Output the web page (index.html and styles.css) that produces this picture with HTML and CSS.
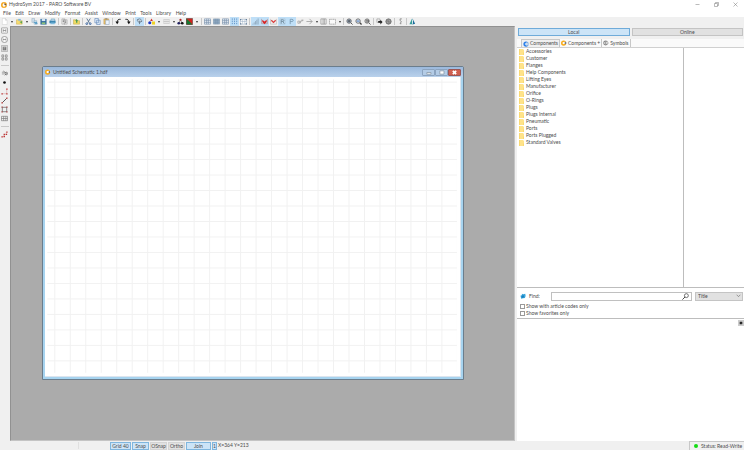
FILE: index.html
```
<!DOCTYPE html>
<html lang="en">
<head>
    <meta charset="UTF-8">
    <meta name="viewport" content="width=device-width, initial-scale=1.0">
    <title>HydroSym 2017 - PARO Software BV</title>
    <link rel="stylesheet" href="styles.css">
</head>
<body>

<!-- shared icons -->
<svg class="defs" aria-hidden="true">
    <symbol id="logo" viewBox="0 0 16 16"><circle cx="8" cy="8" r="6" fill="none" stroke="#f5a51c" stroke-width="4"/><path d="M8 2v12M8 8h7" stroke="#fff" stroke-width="2"/><path d="M9 3l5 3v3l-5-1z" fill="#6b5a44"/></symbol>
    <symbol id="part-blue" viewBox="0 0 16 16"><circle cx="8" cy="8" r="5" fill="#b8dafa" stroke="#2f80e8" stroke-width="4"/><path d="M8 4h7v8H8z" fill="#eaf4ff"/><path d="M9 5h5M9 8h6M9 11h5" stroke="#5f7fa8"/></symbol>
    <symbol id="part-orange" viewBox="0 0 16 16"><circle cx="7" cy="8" r="5" fill="#fff" stroke="#f8ac1c" stroke-width="4"/><path d="M8 5h7v5H8z" fill="#fff"/><path d="M9 8h6M12 5v6" stroke="#59636f" stroke-width="2"/></symbol>
    <symbol id="part-gray" viewBox="0 0 16 16"><circle cx="7" cy="8" r="5" fill="#fff" stroke="#888" stroke-width="3"/><path d="M8 5h7v5H8z" fill="#fff"/><path d="M9 8h6M7 5v6" stroke="#777" stroke-width="2"/></symbol>
    <symbol id="folder" viewBox="0 0 10 12"><path d="M0 0h8l2 2v10H0z" fill="#ffe38a"/><path d="M0 0h2v12H0z" fill="#f9d973"/><path d="M8 7h2v5H8z" fill="#f9d973"/></symbol>
    <symbol id="new" viewBox="0 0 16 16"><path d="M3 1h7l4 4v10H3z" fill="#fff" stroke="#c5c5c5"/><path d="M10 1v4h4" fill="none" stroke="#b0b0b0"/></symbol>
    <symbol id="open" viewBox="0 0 16 16"><path d="M1 4h5l1 2h7v8H1z" fill="#f7dc72" stroke="#c6a548"/><path d="M5 2h6v4H5z" fill="#83bbe1"/><path d="M8 9l6-2v6z" fill="#5ba553"/></symbol>
    <symbol id="import" viewBox="0 0 16 16"><path d="M2 1h6v9H2z" fill="#cfe0ed" stroke="#8da4b5"/><path d="M7 6h6v8H7z" fill="#d9e7ef" stroke="#7aa0b9"/><path d="M7 10h7M9 13h6" stroke="#3d8fc0" stroke-width="2"/></symbol>
    <symbol id="save" viewBox="0 0 16 16"><path d="M1 2h14v13H1z" fill="#356d9e"/><path d="M4 2h8v5H4z" fill="#d9e8f4"/><path d="M4 10h8v4H4z" fill="#8ec37a"/></symbol>
    <symbol id="print" viewBox="0 0 16 16"><path d="M1 6h14v6H1z" fill="#3886b2"/><path d="M5 2h8v5H4z" fill="#b9d8ea" stroke="#508caf"/><path d="M4 10h9v4H3z" fill="#7db9dc"/></symbol>
    <symbol id="props" viewBox="0 0 16 16"><path d="M2 2h7v12H2zM7 4h7v10H7z" fill="#eee" stroke="#888"/><path d="M4 5h3M4 8h3M9 7h3M9 10h3" stroke="#666" stroke-width="1.5"/></symbol>
    <symbol id="export" viewBox="0 0 16 16"><path d="M1 4h5l1 2h8v8H1z" fill="#f0da65" stroke="#b5a13c"/><path d="M8 2l4 4h-2v5H7V6H5z" fill="#4c9951"/></symbol>
    <symbol id="cut" viewBox="0 0 16 16"><path d="M4 1l6 10M12 1L6 11" stroke="#56708e" stroke-width="2" fill="none"/><circle cx="4" cy="13" r="2" fill="none" stroke="#345f9c" stroke-width="2"/><circle cx="12" cy="13" r="2" fill="none" stroke="#345f9c" stroke-width="2"/></symbol>
    <symbol id="copy" viewBox="0 0 16 16"><path d="M2 1h8v10H2zM6 5h8v10H6z" fill="#e4f0fc" stroke="#6589ba" stroke-width="1.5"/></symbol>
    <symbol id="paste" viewBox="0 0 16 16"><path d="M2 2h11v12H2z" fill="#eac06a" stroke="#b38c47"/><path d="M6 5h8v10H6z" fill="#edf4fd" stroke="#7a9bc4"/><path d="M5 1h5v2H5z" fill="#777"/></symbol>
    <symbol id="undo" viewBox="0 0 16 16"><path d="M13 3C7 2 5 5 5 11" fill="none" stroke="#222" stroke-width="2"/><path d="M1 8h8l-4 6z" fill="#111"/></symbol>
    <symbol id="redo" viewBox="0 0 16 16"><path d="M3 3c6-1 8 2 8 8" fill="none" stroke="#222" stroke-width="2"/><path d="M7 8h8l-4 6z" fill="#111"/></symbol>
    <symbol id="pin" viewBox="0 0 16 16"><circle cx="8" cy="6" r="4" fill="#dbe9f3" stroke="#6f7f8e" stroke-width="2"/><path d="M8 6v8M2 5l3-2M11 9l3-2" stroke="#677786" stroke-width="2"/></symbol>
    <symbol id="shapes" viewBox="0 0 16 16"><path d="M8 1l3 6H5z" fill="#d42a20"/><circle cx="4" cy="11" r="3.500" fill="#1d35c7"/><path d="M9 8h7v7H9z" fill="#f0d323"/></symbol>
    <symbol id="line-style" viewBox="0 0 16 16"><path d="M1 4h14M1 8h14M1 12h14" stroke="#b4b4b4" stroke-width="1.5"/><path d="M1 4v8M15 4v8" stroke="#ccc"/></symbol>
    <symbol id="nodes" viewBox="0 0 16 16"><path d="M8 4L4 12h8z" fill="none" stroke="#222"/><circle cx="8" cy="4" r="2.500" fill="#b62226"/><circle cx="4" cy="12" r="3" fill="#202060"/><circle cx="12" cy="12" r="3" fill="#111"/></symbol>
    <symbol id="colors" viewBox="0 0 16 16"><path d="M1 1h14v14H1z" fill="#d1211c"/><path d="M1 1v14h14z" fill="#167830"/><path d="M1 1h14v14H1z" fill="none" stroke="#333"/></symbol>
    <symbol id="grid" viewBox="0 0 16 16"><path d="M1 2h14v12H1z" fill="#eef5fc"/><path d="M1 2h14M1 6h14M1 10h14M1 14h14M1 2v12M6 2v12M10 2v12M15 2v12" stroke="#7890aa" stroke-width="1.5"/></symbol>
    <symbol id="grid-full" viewBox="0 0 16 16"><path d="M1 2h14v12H1z" fill="#91abc3"/><path d="M1 2h14M1 6h14M1 10h14M1 14h14M1 2v12M6 2v12M10 2v12M15 2v12" stroke="#7890aa"/></symbol>
    <symbol id="grid-dots" viewBox="0 0 16 16"><path d="M3 1v14M8 1v14M13 1v14" stroke="#5c90c7" stroke-width="2" stroke-dasharray="3 2"/></symbol>
    <symbol id="grid-edit" viewBox="0 0 16 16"><path d="M1 3h14v11H1zM6 3v11M11 3v11M1 8h14" fill="#fff" stroke="#8da4bd"/><path d="M0 2h3v3H0zM13 2h3v3h-3zM0 12h3v3H0zM13 12h3v3h-3z" fill="#657f9b"/></symbol>
    <symbol id="bars" viewBox="0 0 16 16"><path d="M2 13v2M5 10v5M8 7v8M11 4v11M14 1v14" stroke="#8197ab" stroke-width="1.500"/></symbol>
    <symbol id="snap" viewBox="0 0 16 16"><path d="M1 2v11h14V2" fill="none" stroke="#b5a1a9" stroke-width="2"/><path d="M3 4l5 4 5-4v5l-5 5-5-5z" fill="#d92626"/></symbol>
    <symbol id="snap-line" viewBox="0 0 16 16"><path d="M1 2v12h14V2" fill="none" stroke="#bbb" stroke-width="1.500"/><path d="M3 5l5 5 5-5" fill="none" stroke="#d94040" stroke-width="3"/></symbol>
    <symbol id="regular" viewBox="0 0 16 16"><path d="M2 2h12v12H2z" fill="none" stroke="#a8bac7"/><path d="M5 13V4h4c3 0 3 4 0 4H5m4 0l3 5" fill="none" stroke="#718a9b" stroke-width="2"/></symbol>
    <symbol id="port" viewBox="0 0 16 16"><path d="M5 14V3h4c4 0 4 5 0 5H5" fill="none" stroke="#7a9bb3" stroke-width="2"/></symbol>
    <symbol id="turn" viewBox="0 0 16 16"><path d="M2 7h4v5H2zM8 12V7h4V4M10 5h5" fill="none" stroke="#999" stroke-width="1.5"/></symbol>
    <symbol id="arrow" viewBox="0 0 16 16"><path d="M1 8h13M8 2l6 6-6 6" fill="none" stroke="#8c8c8c" stroke-width="1.5"/></symbol>
    <symbol id="panel" viewBox="0 0 16 16"><path d="M2 2h12v12H2zM7 2v12M10 2v12" fill="#eee" stroke="#8f8f8f" stroke-width="1.5"/></symbol>
    <symbol id="frame" viewBox="0 0 16 16"><path d="M1 3h14v11H1z" fill="#fafafa" stroke="#888" stroke-width="1.5" stroke-dasharray="3 1"/></symbol>
    <symbol id="zoom-in" viewBox="0 0 16 16"><circle cx="7" cy="7" r="5" fill="#a6bdd7" stroke="#666" stroke-width="2"/><path d="M4 7h6M7 4v6M11 11l4 4" stroke="#444" stroke-width="2"/></symbol>
    <symbol id="zoom-out" viewBox="0 0 16 16"><circle cx="7" cy="7" r="5" fill="#dbe8f5" stroke="#666" stroke-width="2"/><path d="M4 7h6" stroke="#3565ae" stroke-width="2"/><path d="M11 11l4 4" stroke="#444" stroke-width="3"/></symbol>
    <symbol id="zoom-fit" viewBox="0 0 16 16"><circle cx="7" cy="7" r="5" fill="#ddd" stroke="#777" stroke-width="2"/><path d="M4 5h6v4H4M11 11l4 4" fill="none" stroke="#555" stroke-width="2"/></symbol>
    <symbol id="move" viewBox="0 0 16 16"><path d="M2 2h7v8H2z" fill="#eee" stroke="#777"/><path d="M5 7h5V4l5 5-5 6v-4H5z" fill="#222"/></symbol>
    <symbol id="globe" viewBox="0 0 16 16"><circle cx="8" cy="8" r="6" fill="#a0a0a0" stroke="#666" stroke-width="2"/><path d="M2 8h12M8 2v12M4 4l8 8" stroke="#777"/></symbol>
    <symbol id="info" viewBox="0 0 16 16"><path d="M11 2H7v4l3 2-3 5h3" fill="none" stroke="#888" stroke-width="2"/></symbol>
    <symbol id="help" viewBox="0 0 16 16"><path d="M7 1L1 14h7z" fill="#369d9a"/><path d="M8 1l6 12-6 2z" fill="#1c6a9b"/><path d="M7 4h2v9H7z" fill="#e4f5f3"/></symbol>
    <symbol id="block" viewBox="0 0 16 16"><rect x="1" y="2" width="14" height="12" rx="1" fill="#f8f8f8" stroke="#888" stroke-width="1.5"/><path d="M5 5v6M11 5v6M5 8h6" stroke="#777" stroke-width="1.5"/></symbol>
    <symbol id="block-round" viewBox="0 0 16 16"><circle cx="8" cy="8" r="7" fill="#f8f8f8" stroke="#777" stroke-width="1.5"/><path d="M5 6v4M11 6v4M5 8h6" stroke="#777" stroke-width="1.5"/></symbol>
    <symbol id="block-dark" viewBox="0 0 16 16"><path d="M1 1h14v14H1z" fill="#dedede" stroke="#888"/><path d="M4 4h8v8H4z" fill="#777"/><path d="M6 6h4M6 9h3" stroke="#eee"/></symbol>
    <symbol id="tiles" viewBox="0 0 16 16"><path d="M2 2h4v5H2zM10 2h4v5h-4zM2 9h4v5H2zM10 9h4v5h-4z" fill="#eee" stroke="#777" stroke-width="1.5"/></symbol>
    <symbol id="select" viewBox="0 0 16 16"><path d="M2 5h6l5 3-5 4M2 9h5M5 2l4 3" fill="none" stroke="#777" stroke-width="1.5"/><circle cx="12" cy="8" r="3" fill="none" stroke="#555" stroke-width="1.5"/></symbol>
    <symbol id="dot" viewBox="0 0 16 16"><circle cx="8" cy="8" r="3" fill="#111"/></symbol>
    <symbol id="elbow" viewBox="0 0 16 16"><path d="M2 13h11V3" fill="none" stroke="#d08c8c"/><path d="M1 12h3v3H1zM12 12h3v3h-3zM12 1h3v3h-3z" fill="#bd3030"/></symbol>
    <symbol id="line" viewBox="0 0 16 16"><path d="M3 13L13 3" stroke="#444" stroke-width="2"/><path d="M1 12h3v3H1zM12 1h3v3h-3z" fill="#bd3030"/></symbol>
    <symbol id="rect" viewBox="0 0 16 16"><path d="M3 3h10v10H3z" fill="none" stroke="#555" stroke-width="1.500"/><path d="M1 12h3v3H1zM12 1h3v3h-3zM1 1h3v3H1zM12 12h3v3h-3z" fill="#a84444"/></symbol>
    <symbol id="table" viewBox="0 0 16 16"><path d="M1 3h14v10H1zM1 8h14M6 3v10M11 3v10" fill="none" stroke="#777" stroke-width="1.5"/></symbol>
    <symbol id="steps" viewBox="0 0 16 16"><path d="M2 13h5V8h5V3" fill="none" stroke="#d08c8c"/><path d="M1 12h3v3H1zM6 11h3v3H6zM6 6h3v3H6zM11 6h3v3h-3zM12 1h3v3h-3z" fill="#bd3030"/></symbol>
    <symbol id="star" viewBox="0 0 16 16"><path d="M5 2l4 1 5-1 1 6-2 5-5 1-5 1-1-5-1-3 4-1z" fill="#3aa6dc"/><path d="M4 7l6-1 1 5-6 2z" fill="#1a7fbd"/></symbol>
    <symbol id="search" viewBox="0 0 16 16"><circle cx="10" cy="6" r="4.500" fill="none" stroke="#333" stroke-width="1.500"/><path d="M7 9l-6 6" stroke="#333" stroke-width="2"/></symbol>
</svg>

<div class="app">
    <header class="titlebar">
        <svg class="logo"><use href="#logo"/></svg>
        <h1 class="app-title">HydroSym 2017 - PARO Software BV</h1>
        <button class="caption-btn" aria-label="Minimize"><svg viewBox="0 0 10 10"><path d="M1 5h8" stroke="#777"/></svg></button>
        <button class="caption-btn" aria-label="Restore"><svg viewBox="0 0 10 10"><path d="M1 3h6v6H1zM3 3V1h6v6H7" fill="none" stroke="#777"/></svg></button>
        <button class="caption-btn" aria-label="Close"><svg viewBox="0 0 10 10"><path d="M1 1l8 8M9 1L1 9" stroke="#777"/></svg></button>
    </header>

    <nav class="menubar">
        <button>File</button>
        <button>Edit</button>
        <button>Draw</button>
        <button>Modify</button>
        <button>Format</button>
        <button>Assist</button>
        <button>Window</button>
        <button>Print</button>
        <button>Tools</button>
        <button>Library</button>
        <button>Help</button>
    </nav>

    <div class="toolbar" role="toolbar" aria-label="Standard">
        <button class="tool" aria-label="New"><svg><use href="#new"/></svg></button>
        <button class="drop" aria-label="New options"></button>
        <button class="tool" aria-label="Open"><svg><use href="#open"/></svg></button>
        <button class="drop" aria-label="Recent files"></button>
        <button class="tool" aria-label="Import"><svg><use href="#import"/></svg></button>
        <button class="tool" aria-label="Save"><svg><use href="#save"/></svg></button>
        <button class="tool" aria-label="Print"><svg><use href="#print"/></svg></button>
        <span class="sep"></span>
        <button class="tool" aria-label="Properties"><svg><use href="#props"/></svg></button>
        <span class="sep"></span>
        <button class="tool" aria-label="Export"><svg><use href="#export"/></svg></button>
        <span class="sep"></span>
        <button class="tool" aria-label="Cut"><svg><use href="#cut"/></svg></button>
        <button class="tool" aria-label="Copy"><svg><use href="#copy"/></svg></button>
        <button class="tool" aria-label="Paste"><svg><use href="#paste"/></svg></button>
        <span class="sep"></span>
        <button class="tool" aria-label="Undo"><svg><use href="#undo"/></svg></button>
        <button class="tool" aria-label="Redo"><svg><use href="#redo"/></svg></button>
        <span class="sep"></span>
        <button class="tool active" aria-label="Pin"><svg><use href="#pin"/></svg></button>
        <span class="sep"></span>
        <button class="tool" aria-label="Shapes"><svg><use href="#shapes"/></svg></button>
        <button class="drop" aria-label="Shape options"></button>
        <button class="tool" aria-label="Line style"><svg><use href="#line-style"/></svg></button>
        <button class="drop narrow" aria-label="Line style options"></button>
        <button class="tool" aria-label="Nodes"><svg><use href="#nodes"/></svg></button>
        <button class="tool" aria-label="Colors"><svg><use href="#colors"/></svg></button>
        <button class="drop" aria-label="Color options"></button>
        <span class="sep"></span>
        <button class="tool" aria-label="Grid"><svg><use href="#grid"/></svg></button>
        <button class="tool" aria-label="Fine grid"><svg><use href="#grid-full"/></svg></button>
        <button class="tool" aria-label="Grid lines"><svg><use href="#grid"/></svg></button>
        <button class="tool active" aria-label="Grid dots"><svg><use href="#grid-dots"/></svg></button>
        <button class="tool" aria-label="Edit grid"><svg><use href="#grid-edit"/></svg></button>
        <span class="sep"></span>
        <button class="tool active" aria-label="Levels"><svg><use href="#bars"/></svg></button>
        <button class="tool active" aria-label="Snap to port"><svg><use href="#snap"/></svg></button>
        <button class="tool" aria-label="Snap to line"><svg><use href="#snap-line"/></svg></button>
        <button class="tool active" aria-label="References"><svg><use href="#regular"/></svg></button>
        <button class="tool active" aria-label="Ports"><svg><use href="#port"/></svg></button>
        <button class="tool" aria-label="Turn"><svg><use href="#turn"/></svg></button>
        <button class="tool" aria-label="Arrow"><svg><use href="#arrow"/></svg></button>
        <button class="drop narrow" aria-label="Arrow options"></button>
        <button class="tool" aria-label="Panel"><svg><use href="#panel"/></svg></button>
        <button class="tool" aria-label="Frame"><svg><use href="#frame"/></svg></button>
        <button class="drop narrow" aria-label="Frame options"></button>
        <span class="sep"></span>
        <button class="tool" aria-label="Zoom in"><svg><use href="#zoom-in"/></svg></button>
        <button class="tool" aria-label="Zoom out"><svg><use href="#zoom-out"/></svg></button>
        <button class="tool" aria-label="Zoom to fit"><svg><use href="#zoom-fit"/></svg></button>
        <span class="sep"></span>
        <button class="tool" aria-label="Send"><svg><use href="#move"/></svg></button>
        <button class="tool" aria-label="Web"><svg><use href="#globe"/></svg></button>
        <span class="sep"></span>
        <button class="tool" aria-label="Info"><svg><use href="#info"/></svg></button>
        <span class="sep"></span>
        <button class="tool" aria-label="Help"><svg><use href="#help"/></svg></button>
    </div>

    <main class="main">
        <div class="sidebar" role="toolbar" aria-label="Draw">
            <button class="tool" aria-label="Block"><svg><use href="#block"/></svg></button>
            <button class="tool" aria-label="Round block"><svg><use href="#block-round"/></svg></button>
            <button class="tool" aria-label="Filled block"><svg><use href="#block-dark"/></svg></button>
            <button class="tool" aria-label="Tiles"><svg><use href="#tiles"/></svg></button>
            <span class="hsep"></span>
            <button class="tool" aria-label="Select"><svg><use href="#select"/></svg></button>
            <button class="tool" aria-label="Point"><svg><use href="#dot"/></svg></button>
            <button class="tool" aria-label="Elbow"><svg><use href="#elbow"/></svg></button>
            <button class="tool" aria-label="Line"><svg><use href="#line"/></svg></button>
            <button class="tool" aria-label="Rectangle"><svg><use href="#rect"/></svg></button>
            <button class="tool" aria-label="Table"><svg><use href="#table"/></svg></button>
            <span class="hsep"></span>
            <button class="tool" aria-label="Steps"><svg><use href="#steps"/></svg></button>
        </div>

        <div class="workspace">
            <section class="doc">
                <div class="doc-title">
                    <svg class="doc-icon"><use href="#part-orange"/></svg>
                    <h2>Untitled Schematic 1.hdf</h2>
                    <button class="doc-btn" aria-label="Minimize"><svg viewBox="0 0 12 6"><path d="M4 3h5v2H4z" fill="#fff" stroke="#8c9bab"/></svg></button>
                    <button class="doc-btn" aria-label="Maximize"><svg viewBox="0 0 12 6"><path d="M4 1h5v4H4z" fill="#fff" stroke="#8c9bab"/></svg></button>
                    <button class="doc-btn doc-close" aria-label="Close"><svg viewBox="0 0 12 6"><path d="M4 1l4 4M8 1L4 5" stroke="#fff" stroke-width="2"/></svg></button>
                </div>
                <div class="sheet">
                    <svg viewBox="0 0 1072 773" preserveAspectRatio="xMinYMin slice">
                        <pattern id="cells" x="24" y="12" width="40" height="40" patternUnits="userSpaceOnUse">
                            <path d="M1 0v40M0 1h40" stroke="#f1f1f1" stroke-width="3"/>
                        </pattern>
                        <rect x="6" y="6" width="1058" height="758" fill="url(#cells)"/>
                    </svg>
                </div>
            </section>
        </div>

        <aside class="library">
            <div class="sources">
                <button class="source selected">Local</button>
                <button class="source">Online</button>
            </div>
            <div class="tabs" role="tablist">
                <button class="tab current" role="tab"><svg><use href="#part-blue"/></svg>Components</button>
                <button class="tab" role="tab"><svg><use href="#part-orange"/></svg>Components +</button>
                <button class="tab" role="tab"><svg><use href="#part-gray"/></svg>Symbols</button>
            </div>
            <div class="browser">
                <ul class="tree">
                    <li><svg><use href="#folder"/></svg>Accessories</li>
                    <li><svg><use href="#folder"/></svg>Customer</li>
                    <li><svg><use href="#folder"/></svg>Flanges</li>
                    <li><svg><use href="#folder"/></svg>Help Components</li>
                    <li><svg><use href="#folder"/></svg>Lifting Eyes</li>
                    <li><svg><use href="#folder"/></svg>Manufacturer</li>
                    <li><svg><use href="#folder"/></svg>Orifice</li>
                    <li><svg><use href="#folder"/></svg>O-Rings</li>
                    <li><svg><use href="#folder"/></svg>Plugs</li>
                    <li><svg><use href="#folder"/></svg>Plugs Internal</li>
                    <li><svg><use href="#folder"/></svg>Pneumatic</li>
                    <li><svg><use href="#folder"/></svg>Ports</li>
                    <li><svg><use href="#folder"/></svg>Ports Plugged</li>
                    <li><svg><use href="#folder"/></svg>Standard Valves</li>
                </ul>
                <div class="items"></div>
            </div>
            <form class="find">
                <div class="find-row">
                    <svg class="star"><use href="#star"/></svg>
                    <label for="find">Find:</label>
                    <div class="search">
                        <input type="text" id="find">
                        <button type="button" aria-label="Search"><svg><use href="#search"/></svg></button>
                    </div>
                    <select aria-label="Search in">
                        <option>Title</option>
                    </select>
                </div>
                <label class="check"><input type="checkbox">Show with article codes only</label>
                <label class="check"><input type="checkbox">Show favorites only</label>
            </form>
            <div class="preview">
                <button class="preview-close" aria-label="Close preview"><svg viewBox="0 0 10 10"><path d="M3 3l4 4M7 3L3 7" stroke="#222" stroke-width="2"/></svg></button>
            </div>
        </aside>
    </main>

    <footer class="statusbar">
        <span class="hint"></span>
        <div class="modes">
            <button class="mode wide on">Grid 40</button>
            <button class="mode on">Snap</button>
            <button class="mode">OSnap</button>
            <button class="mode">Ortho</button>
            <button class="mode join on">Join</button>
            <button class="mode count on">1</button>
        </div>
        <span class="coords">X=364 Y=213</span>
        <div class="state"><span class="led"></span>Status: Read-Write</div>
    </footer>
</div>

</body>
</html>
```
FILE: styles.css
```
* {
    box-sizing: border-box;
}
body {
    margin: 0;
    font-family: Lato, "Open Sans", sans-serif;
    font-size: 5px;
    line-height: 7px;
    color: #4c4c4c;
    background: #fff;
}
button, input, select {
    margin: 0;
    padding: 0;
    border: 0;
    border-radius: 0;
    background: none;
    font: inherit;
    color: inherit;
}
h1, h2 {
    margin: 0;
    font-size: 5px;
    font-weight: normal;
}
svg {
    display: block;
    flex: none;
    width: 7px;
    height: 7px;
}
.defs {
    position: absolute;
    width: 0;
    height: 0;
}
.app {
    display: flex;
    flex-direction: column;
    height: 100vh;
}

/* title and menu */
.titlebar {
    display: flex;
    align-items: center;
    height: 9px;
    padding-left: 1px;
    gap: 2px;
}
.logo {
    width: 6px;
    height: 6px;
}
.app-title {
    flex: 1;
}
.caption-btn {
    display: flex;
    justify-content: center;
    width: 17px;
}
.caption-btn svg {
    width: 5px;
    height: 5px;
}
.menubar {
    display: flex;
    justify-content: space-between;
    height: 8px;
    max-width: 186px;
    padding-left: 3px;
}

/* toolbars */
.toolbar {
    display: flex;
    height: 9px;
    background: #f0f0f0;
}
.tool {
    display: flex;
    align-items: center;
    justify-content: center;
    flex: none;
    width: 9px;
    height: 9px;
}
.active {
    background: #bfdff7;
}
.drop {
    display: flex;
    align-items: center;
    justify-content: center;
    width: 6px;
}
.drop.narrow {
    width: 5px;
}
.drop::after {
    content: "";
    border: 1px solid transparent;
    border-top: 2px solid #333;
    border-bottom: 0;
}
.sep {
    width: 1px;
    margin: 1px;
    background: #c8c8c8;
}
.hsep {
    height: 1px;
    margin: 3px 1px;
    background: #c8c8c8;
}

.main {
    display: flex;
    flex: 1;
    min-height: 0;
}
.sidebar {
    display: flex;
    flex-direction: column;
    width: 10px;
    background: #f0f0f0;
}

/* document area */
.workspace {
    display: flex;
    flex: 1;
    padding: 39px 50px 60px 31px;
    background: #ababab;
    border: 1px solid #919191;
    border-right-color: #c4c4c4;
    border-bottom-color: #c4c4c4;
}
.doc {
    display: flex;
    flex: 1;
    flex-direction: column;
    padding: 0 2px 2px;
    background: #a6d3ef;
    border: 1px solid #6b7d8c;
    border-radius: 2px 2px 0 0;
}
.doc-title {
    display: flex;
    align-items: center;
    height: 10px;
    margin: 0 -2px;
    padding: 0 2px;
    gap: 2px;
    background: linear-gradient(#9bb9dc, #b9d1eb);
}
.doc-icon {
    width: 6px;
    height: 6px;
}
.doc-title h2 {
    flex: 1;
}
.doc-btn {
    width: 13px;
    height: 7px;
    margin-left: -2px;
    border: 1px solid #8ca4c0;
    border-radius: 1px;
    background: #b4cce6;
}
.doc-btn svg {
    width: 100%;
    height: 5px;
}
.doc-close {
    background: #cf5f50;
    border-color: #9a5655;
}
.sheet {
    flex: 1;
    min-height: 0;
    background: #fff;
    border-right: 1px solid #dde5ee;
    border-bottom: 1px solid #dde5ee;
}
.sheet svg {
    width: 100%;
    height: 100%;
}

/* library panel */
.library {
    display: flex;
    flex-direction: column;
    width: 229px;
    padding-left: 2px;
    background: #f0f0f0;
}
.sources {
    display: flex;
    gap: 2px;
    padding: 2px 1px 3px;
}
.source {
    flex: 1;
    height: 8px;
    line-height: 6px;
    background: #e1e1e1;
    border: 1px solid #c4c4c4;
}
.source.selected {
    background: #cce4f7;
    border-color: #6fabd9;
}
.tabs {
    display: flex;
    height: 9px;
    padding-left: 4px;
    background: #fafafa;
    border-bottom: 1px solid #d0d0d0;
}
.tab {
    display: flex;
    align-items: center;
    gap: 1px;
    padding: 0 1px;
    border-right: 1px solid #c8c8c8;
}
.tab svg {
    width: 6px;
    height: 6px;
}
.tab.current {
    background: #f0f0f0;
    border: 1px solid #c8c8c8;
    border-bottom: 0;
}
.browser {
    display: flex;
    flex: 1;
    background: #fff;
    border-bottom: 1px solid #bdbdbd;
}
.tree {
    flex: 166;
    margin: 0;
    padding: 0 2px;
    list-style: none;
    border-right: 1px solid #bdbdbd;
}
.tree li {
    display: flex;
    align-items: center;
    height: 7px;
    gap: 2px;
}
.tree svg {
    width: 5px;
    height: 6px;
}
.items {
    flex: 61;
}
.find {
    padding: 3px 1px 1px 3px;
    background: #fff;
    border-bottom: 1px solid #bdbdbd;
}
.find-row {
    display: flex;
    align-items: center;
    height: 10px;
    margin-bottom: 2px;
}
.star {
    width: 6px;
    height: 6px;
}
.find-row label {
    width: 25px;
    padding-left: 3px;
}
.search {
    display: flex;
    align-items: center;
    flex: 1;
    height: 9px;
    padding-right: 2px;
    border: 1px solid #c0c0c0;
}
.search input {
    flex: 1;
    min-width: 0;
    height: 7px;
}
.find-row select {
    width: 48px;
    height: 9px;
    margin-left: 3px;
    padding-left: 2px;
    appearance: none;
    background: #e1e1e1 url("data:image/svg+xml,%3Csvg xmlns='http://www.w3.org/2000/svg' viewBox='0 0 8 6'%3E%3Cpath d='M1 1l3 3 3-3' fill='none' stroke='%23666'/%3E%3C/svg%3E") no-repeat right 1px center / 5px 4px;
    border: 1px solid #c4c4c4;
}
.check {
    display: flex;
    align-items: center;
    height: 7px;
    gap: 1px;
}
.check input {
    appearance: none;
    width: 5px;
    height: 5px;
    border: 1px solid #999;
    background: #fff;
}
.preview {
    display: flex;
    justify-content: flex-end;
    align-items: flex-start;
    height: 122px;
    padding-top: 1px;
    background: #fff;
}
.preview-close {
    width: 6px;
    height: 6px;
    background: #ccc;
}
.preview-close svg {
    width: 6px;
    height: 6px;
}

/* status bar */
.statusbar {
    display: flex;
    align-items: center;
    height: 9px;
    background: #f0f0f0;
}
.hint {
    width: 79px;
    height: 7px;
    margin-right: 31px;
    border-right: 1px solid #e0e0e0;
}
.modes {
    display: flex;
    gap: 1px;
}
.mode {
    width: 17px;
    height: 8px;
    line-height: 6px;
    white-space: nowrap;
    background: #e1e1e1;
    border: 1px solid #d4d4d4;
}
.mode.wide {
    width: 21px;
}
.mode.join {
    width: 25px;
}
.mode.count {
    width: 5px;
}
.mode.on {
    background: #cce4f7;
    border-color: #7fb6de;
}
.coords {
    flex: 1;
    padding-left: 1px;
}
.state {
    display: flex;
    align-items: center;
    width: 55px;
    height: 9px;
    padding-left: 4px;
    gap: 3px;
    white-space: nowrap;
    border: 1px solid #c8c8c8;
    border-width: 1px 0 0 1px;
}
.led {
    width: 4px;
    height: 4px;
    border-radius: 50%;
    background: #12dc12;
}
```
